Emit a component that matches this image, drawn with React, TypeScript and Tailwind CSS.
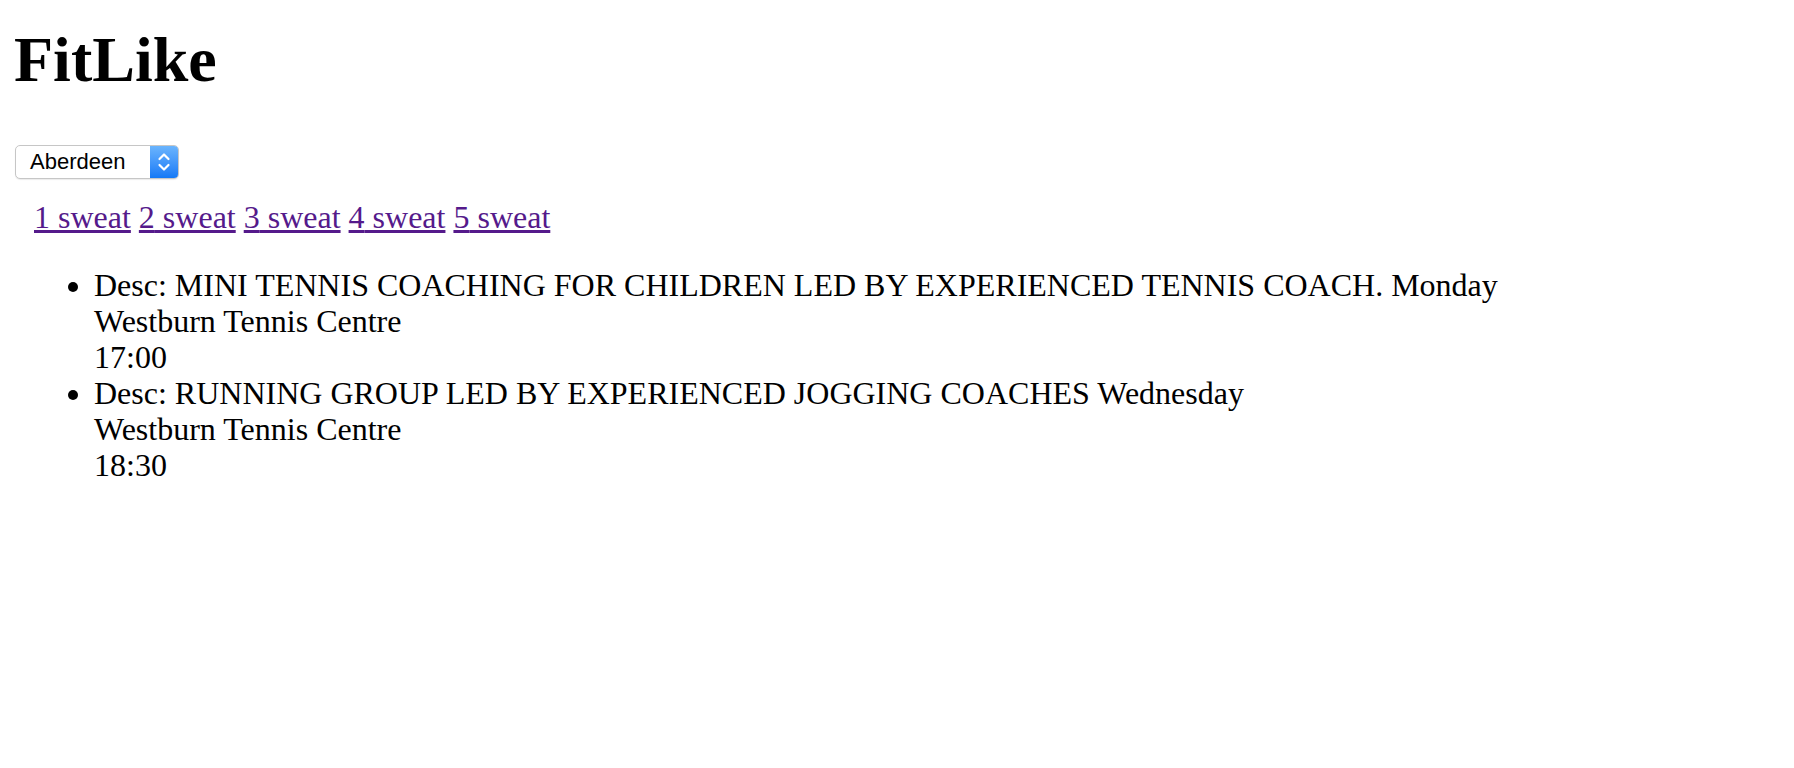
import React from "react";

const items = [
  {
    desc: "MINI TENNIS COACHING FOR CHILDREN LED BY EXPERIENCED TENNIS COACH.",
    day: "Monday",
    venue: "Westburn Tennis Centre",
    time: "17:00",
  },
  {
    desc: "RUNNING GROUP LED BY EXPERIENCED JOGGING COACHES",
    day: "Wednesday",
    venue: "Westburn Tennis Centre",
    time: "18:30",
  },
];

function FakeSelect() {
  return (
    <div className="flex h-[34px] w-[164px] overflow-hidden rounded-[5px] border border-[#c6c6c6] bg-white shadow-[0_1px_1px_rgba(0,0,0,0.08)]">
      <div className="flex flex-1 items-center pl-[14px] font-['Liberation_Sans',Arial,sans-serif] text-[22px] leading-none text-black">
        Aberdeen
      </div>
      <div className="flex w-[28px] items-center justify-center bg-gradient-to-b from-[#6ab4fd] to-[#1279f6]">
        <svg width="14" height="24" viewBox="0 0 14 24" fill="none">
          <path d="M2.5 9 L7 4.5 L11.5 9" stroke="white" strokeWidth="2.2" strokeLinecap="round" strokeLinejoin="round" />
          <path d="M2.5 15 L7 19.5 L11.5 15" stroke="white" strokeWidth="2.2" strokeLinecap="round" strokeLinejoin="round" />
        </svg>
      </div>
    </div>
  );
}

export default function App() {
  return (
    <div className="min-h-screen bg-white px-[14px] font-['Liberation_Serif','Times_New_Roman',serif] text-black">
      <h1 className="pt-[23px] text-[64px] font-bold leading-[74px]">FitLike</h1>
      <div className="mt-[48px] pl-[1px]">
        <FakeSelect />
      </div>
      <div className="mt-[20px] pl-[20px] text-[32px] leading-[36px]">
        {[1, 2, 3, 4, 5].map((n, i) => (
          <React.Fragment key={n}>
            {i > 0 ? " " : null}
            <a href="#" className="text-[#551a8b] underline">
              {n} sweat
            </a>
          </React.Fragment>
        ))}
      </div>
      <ul className="mt-[32px] list-disc pl-[80px] text-[32px] leading-[36px]">
        {items.map((it) => (
          <li key={it.desc}>
            Desc: {it.desc} {it.day}
            <br />
            {it.venue}
            <br />
            {it.time}
          </li>
        ))}
      </ul>
    </div>
  );
}
